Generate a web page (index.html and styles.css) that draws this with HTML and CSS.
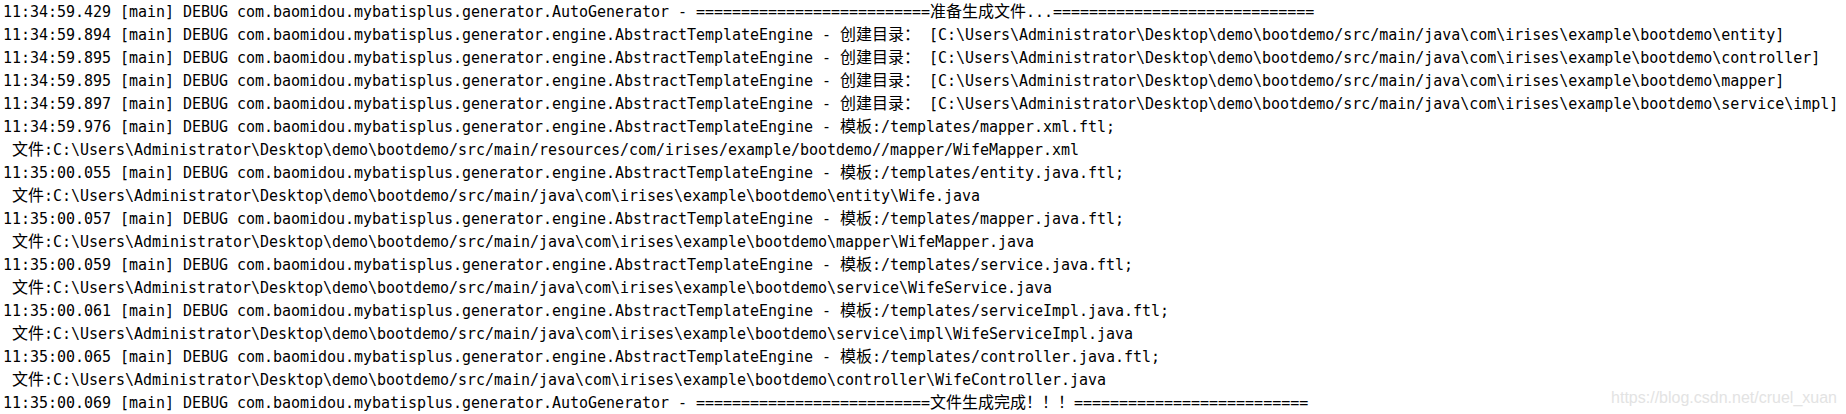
FILE: index.html
```html
<!DOCTYPE html>
<html lang="zh-CN">
<head>
<meta charset="utf-8">
<title>Console</title>
<link rel="stylesheet" href="styles.css">
</head>
<body>
<div class="console">
<pre class="log">11:34:59.429 [main] DEBUG com.baomidou.mybatisplus.generator.AutoGenerator - ==========================<span class="zh">准备生成文件</span>...=============================
11:34:59.894 [main] DEBUG com.baomidou.mybatisplus.generator.engine.AbstractTemplateEngine - <span class="zh">创建目录：</span> [C:\Users\Administrator\Desktop\demo\bootdemo/src/main/java\com\irises\example\bootdemo\entity]
11:34:59.895 [main] DEBUG com.baomidou.mybatisplus.generator.engine.AbstractTemplateEngine - <span class="zh">创建目录：</span> [C:\Users\Administrator\Desktop\demo\bootdemo/src/main/java\com\irises\example\bootdemo\controller]
11:34:59.895 [main] DEBUG com.baomidou.mybatisplus.generator.engine.AbstractTemplateEngine - <span class="zh">创建目录：</span> [C:\Users\Administrator\Desktop\demo\bootdemo/src/main/java\com\irises\example\bootdemo\mapper]
11:34:59.897 [main] DEBUG com.baomidou.mybatisplus.generator.engine.AbstractTemplateEngine - <span class="zh">创建目录：</span> [C:\Users\Administrator\Desktop\demo\bootdemo/src/main/java\com\irises\example\bootdemo\service\impl]
11:34:59.976 [main] DEBUG com.baomidou.mybatisplus.generator.engine.AbstractTemplateEngine - <span class="zh">模板</span>:/templates/mapper.xml.ftl;
 <span class="zh">文件</span>:C:\Users\Administrator\Desktop\demo\bootdemo/src/main/resources/com/irises/example/bootdemo//mapper/WifeMapper.xml
11:35:00.055 [main] DEBUG com.baomidou.mybatisplus.generator.engine.AbstractTemplateEngine - <span class="zh">模板</span>:/templates/entity.java.ftl;
 <span class="zh">文件</span>:C:\Users\Administrator\Desktop\demo\bootdemo/src/main/java\com\irises\example\bootdemo\entity\Wife.java
11:35:00.057 [main] DEBUG com.baomidou.mybatisplus.generator.engine.AbstractTemplateEngine - <span class="zh">模板</span>:/templates/mapper.java.ftl;
 <span class="zh">文件</span>:C:\Users\Administrator\Desktop\demo\bootdemo/src/main/java\com\irises\example\bootdemo\mapper\WifeMapper.java
11:35:00.059 [main] DEBUG com.baomidou.mybatisplus.generator.engine.AbstractTemplateEngine - <span class="zh">模板</span>:/templates/service.java.ftl;
 <span class="zh">文件</span>:C:\Users\Administrator\Desktop\demo\bootdemo/src/main/java\com\irises\example\bootdemo\service\WifeService.java
11:35:00.061 [main] DEBUG com.baomidou.mybatisplus.generator.engine.AbstractTemplateEngine - <span class="zh">模板</span>:/templates/serviceImpl.java.ftl;
 <span class="zh">文件</span>:C:\Users\Administrator\Desktop\demo\bootdemo/src/main/java\com\irises\example\bootdemo\service\impl\WifeServiceImpl.java
11:35:00.065 [main] DEBUG com.baomidou.mybatisplus.generator.engine.AbstractTemplateEngine - <span class="zh">模板</span>:/templates/controller.java.ftl;
 <span class="zh">文件</span>:C:\Users\Administrator\Desktop\demo\bootdemo/src/main/java\com\irises\example\bootdemo\controller\WifeController.java
11:35:00.069 [main] DEBUG com.baomidou.mybatisplus.generator.AutoGenerator - ==========================<span class="zh">文件生成完成！！！</span>==========================</pre>
<div class="watermark">https://blog.csdn.net/cruel_xuan</div>
</div>
</body>
</html>
```

FILE: styles.css
```css
html, body {
  margin: 0;
  padding: 0;
  background: #ffffff;
}

.console {
  position: relative;
  width: 1846px;
  height: 414px;
  overflow: hidden;
  background: #ffffff;
}

.log {
  margin: 0;
  padding: 1px 0 0 3px;
  font-family: "DejaVu Sans Mono", "Liberation Mono", "Noto Sans CJK SC", monospace;
  font-size: 15px;
  letter-spacing: -0.03px;
  line-height: 23px;
  color: #000000;
  white-space: pre;
}

.zh {
  font-family: "Noto Sans CJK SC", sans-serif;
  font-size: 16px;
  line-height: 1;
  letter-spacing: 0;
}

.watermark {
  position: absolute;
  right: 9px;
  bottom: 7px;
  font-family: "Liberation Sans", Arial, sans-serif;
  font-size: 16px;
  line-height: 18px;
  color: #e3e3e3;
}
```
